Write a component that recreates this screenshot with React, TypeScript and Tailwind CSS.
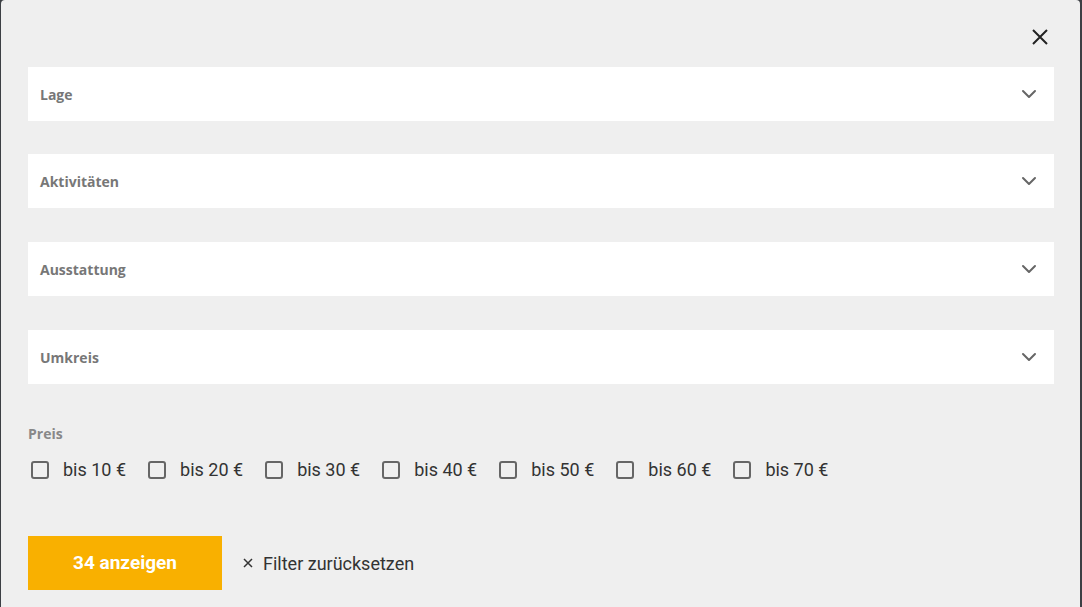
import { ChevronDown } from "lucide-react";

const sections = [
  { label: "Lage", gap: "" },
  { label: "Aktivitäten", gap: "mt-[33px]" },
  { label: "Ausstattung", gap: "mt-[34px]" },
  { label: "Umkreis", gap: "mt-[34px]" },
];
const prices = [10, 20, 30, 40, 50, 60, 70];

const Checkbox = ({ label }: { label: string }) => (
  <label className="flex items-center cursor-pointer">
    <span className="w-[18px] h-[18px] border-2 border-[#666] rounded-[3px] bg-transparent mr-[14px] ml-[3px]" />
    <span className="text-[18px] leading-[22px] text-[#333] mr-[19px] whitespace-nowrap">{label}</span>
  </label>
);

export default function App() {
  return (
    <div className="w-[1082px] h-[607px] bg-[#3c3f44] pl-px pr-[2px] overflow-hidden">
      <div
        className="h-full bg-[#efefef] rounded-t-[4px] flex flex-col pl-[27px] pr-[26px]"
        style={{ fontFamily: "Roboto, 'Liberation Sans', sans-serif" }}
      >
        {/* close */}
        <div className="flex justify-end pt-[29px] pr-[6px] h-[67px]">
          <button aria-label="Schließen" className="text-[#222] h-[16px]">
            <svg width="16" height="16" viewBox="0 0 16 16">
              <path d="M1 1L15 15M15 1L1 15" stroke="currentColor" strokeWidth="2" />
            </svg>
          </button>
        </div>

        {/* accordion rows */}
        <div className="flex flex-col">
          {sections.map((s) => (
            <div
              key={s.label}
              className={`${s.gap} h-[54px] bg-white flex items-center justify-between pl-[12px] pr-[13px]`}
            >
              <span
                className="text-[14px] font-bold text-[#777]"
                style={{ fontFamily: "'Open Sans', 'Noto Sans', sans-serif" }}
              >
                {s.label}
              </span>
              <ChevronDown size={24} strokeWidth={2} className="text-[#666]" />
            </div>
          ))}
        </div>

        {/* price */}
        <div className="mt-[39px]">
          <div
            className="text-[14px] leading-[21px] font-bold text-[#888]"
            style={{ fontFamily: "'Open Sans', 'Noto Sans', sans-serif" }}
          >
            Preis
          </div>
          <div className="flex items-center mt-[15px]">
            {prices.map((p) => (
              <Checkbox key={p} label={`bis ${p} €`} />
            ))}
          </div>
        </div>

        {/* actions */}
        <div className="flex items-center mt-[55px]">
          <button className="w-[194px] h-[54px] bg-[#f9b000] text-white text-[19px] font-bold">
            34 anzeigen
          </button>
          <button className="flex items-center ml-[21px] text-[18px] text-[#333]">
            <svg width="10" height="10" viewBox="0 0 10 10" className="mr-[10px]">
              <path d="M1 1L9 9M9 1L1 9" stroke="currentColor" strokeWidth="1.5" />
            </svg>
            Filter zurücksetzen
          </button>
        </div>
      </div>
    </div>
  );
}
